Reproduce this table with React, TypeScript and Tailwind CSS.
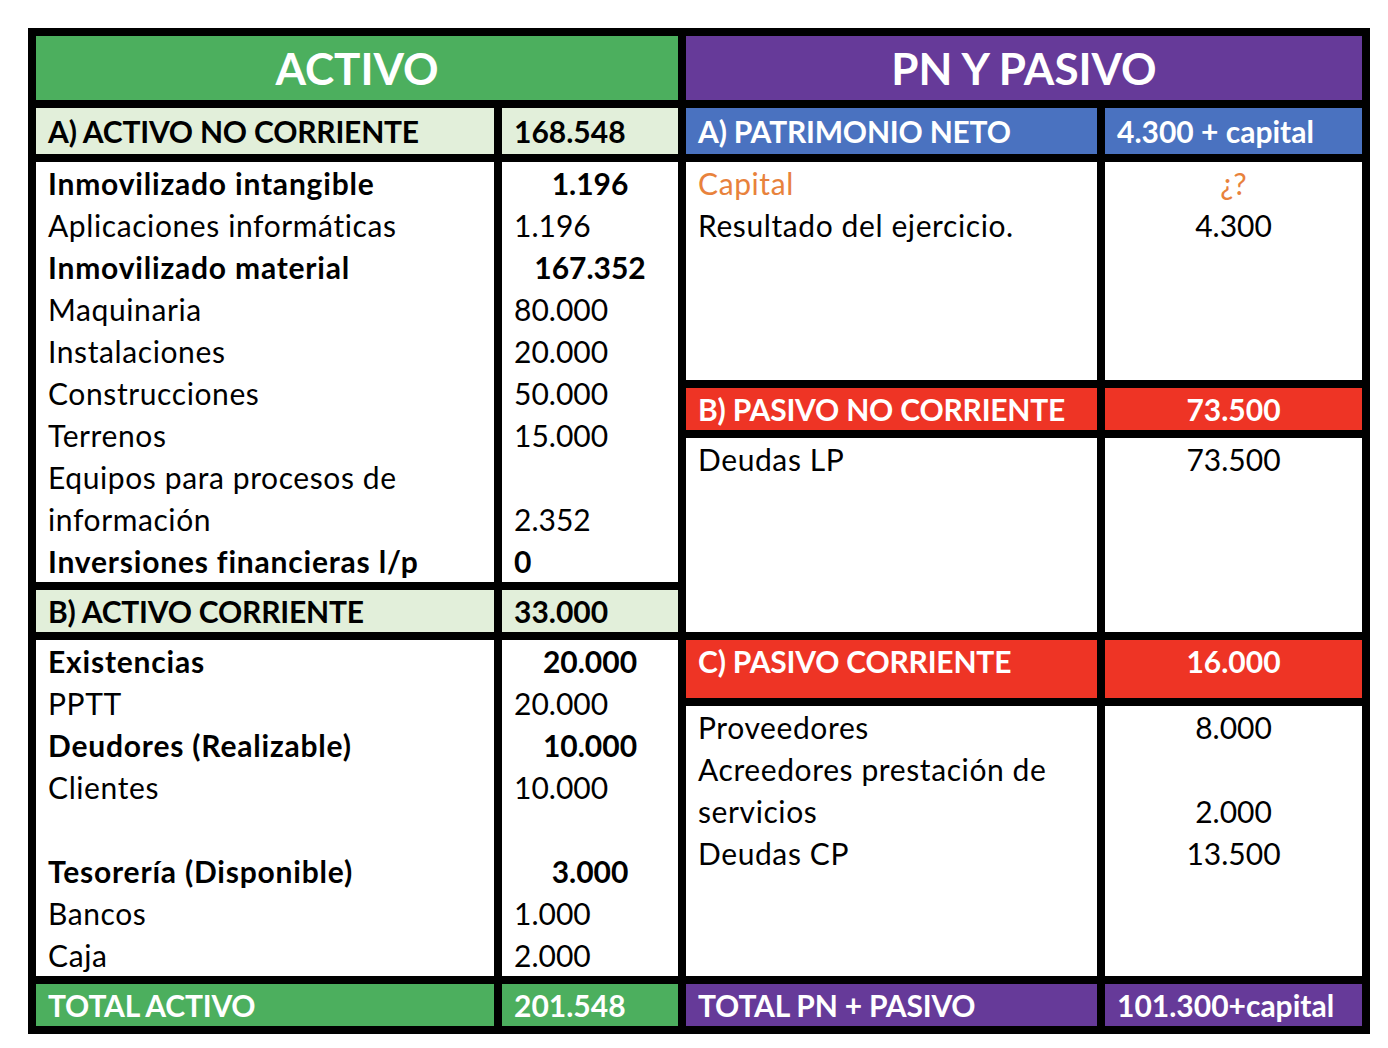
type Line = {
  label: string;
  value?: string;
  bold?: boolean;
  left?: boolean;
  color?: string;
};

const LEFT = "grid-cols-[458px_176px]";
const RIGHT = "grid-cols-[411px_257px]";

const activoNoCorriente: Line[] = [
  { label: "Inmovilizado intangible", value: "1.196", bold: true },
  { label: "Aplicaciones informáticas", value: "1.196" },
  { label: "Inmovilizado material", value: "167.352", bold: true },
  { label: "Maquinaria", value: "80.000" },
  { label: "Instalaciones", value: "20.000" },
  { label: "Construcciones", value: "50.000" },
  { label: "Terrenos", value: "15.000" },
  { label: "Equipos para procesos de", value: "" },
  { label: "información", value: "2.352" },
  { label: "Inversiones financieras l/p", value: "0", bold: true, left: true },
];

const activoCorriente: Line[] = [
  { label: "Existencias", value: "20.000", bold: true },
  { label: "PPTT", value: "20.000" },
  { label: "Deudores (Realizable)", value: "10.000", bold: true },
  { label: "Clientes", value: "10.000" },
  { label: "", value: "" },
  { label: "Tesorería (Disponible)", value: "3.000", bold: true },
  { label: "Bancos", value: "1.000" },
  { label: "Caja", value: "2.000" },
];

type SectionProps = {
  cols: string;
  label: string;
  value: string;
  bg: string;
  dark?: boolean;
  h: string;
  valueCenter?: boolean;
  top?: boolean;
};

function Section({ cols, label, value, bg, dark, h, valueCenter, top }: SectionProps) {
  const text = dark ? "text-black" : "text-white";
  const align = top ? "items-start" : "items-center";
  return (
    <div className={`grid gap-x-2 ${cols} ${h}`}>
      <div className={`${bg} ${text} flex ${align} pl-3 font-bold leading-[42px] tracking-[-0.2px] whitespace-nowrap`}>
        {label}
      </div>
      <div
        className={`${bg} ${text} flex ${align} ${valueCenter ? "justify-center" : "pl-3"} font-bold leading-[42px] whitespace-nowrap`}
      >
        {value}
      </div>
    </div>
  );
}

type BlockProps = {
  cols: string;
  lines: Line[];
  h: string;
  valueCenter?: boolean;
};

function Block({ cols, lines, h, valueCenter }: BlockProps) {
  return (
    <div className={`grid gap-x-2 ${cols} ${h}`}>
      <div className="bg-white pl-3 leading-[42px] text-black">
        {lines.map((l, i) => (
          <div
            key={i}
            className={`h-[42px] whitespace-nowrap ${l.bold ? "font-bold tracking-[0.8px]" : "tracking-[0.6px]"} ${l.color ?? ""}`}
          >
            {l.label}
          </div>
        ))}
      </div>
      <div className="bg-white leading-[42px] text-black">
        {lines.map((l, i) => (
          <div
            key={i}
            className={`h-[42px] whitespace-nowrap ${l.bold ? "font-bold" : ""} ${
              l.left ? "pl-3" : l.bold || valueCenter ? "text-center" : "pl-3"
            } ${l.color ?? ""}`}
          >
            {l.value}
          </div>
        ))}
      </div>
    </div>
  );
}

export default function App() {
  return (
    <div className="min-h-screen bg-white pl-[28px] pt-[28px] font-['Lato',sans-serif] text-[30px]">
      <div className="inline-flex gap-2 bg-black p-2">
        {/* Activo */}
        <div className="flex w-[642px] flex-col gap-2">
          <div className="flex h-[64px] items-center justify-center bg-[#4caf5e] text-[44px] font-bold text-white">
            ACTIVO
          </div>
          <Section cols={LEFT} label="A) ACTIVO NO CORRIENTE" value="168.548" bg="bg-[#e2efda]" dark h="h-[46px]" />
          <Block cols={LEFT} h="h-[420px]" lines={activoNoCorriente} />
          <Section cols={LEFT} label="B) ACTIVO CORRIENTE" value="33.000" bg="bg-[#e2efda]" dark h="h-[42px]" />
          <Block cols={LEFT} lines={activoCorriente} h="h-[336px]" />
          <Section cols={LEFT} label="TOTAL ACTIVO" value="201.548" bg="bg-[#4caf5e]" h="h-[42px]" />
        </div>

        {/* PN y Pasivo */}
        <div className="flex w-[676px] flex-col gap-2">
          <div className="flex h-[64px] items-center justify-center bg-[#663a99] text-[44px] font-bold text-white">
            PN Y PASIVO
          </div>
          <Section cols={RIGHT} label="A) PATRIMONIO NETO" value="4.300 + capital" bg="bg-[#4a72c0]" h="h-[46px]" />
          <Block
            cols={RIGHT}
            h="h-[218px]"
            valueCenter
            lines={[
              { label: "Capital", value: "¿?", color: "text-[#e8823c]" },
              { label: "Resultado del ejercicio.", value: "4.300" },
            ]}
          />
          <Section cols={RIGHT} label="B) PASIVO NO CORRIENTE" value="73.500" bg="bg-[#ee3425]" h="h-[42px]" valueCenter />
          <Block cols={RIGHT} lines={[{ label: "Deudas LP", value: "73.500" }]} h="h-[194px]" valueCenter />
          <Section cols={RIGHT} label="C) PASIVO CORRIENTE" value="16.000" bg="bg-[#ee3425]" h="h-[58px]" valueCenter top />
          <Block
            cols={RIGHT}
            h="h-[270px]"
            valueCenter
            lines={[
              { label: "Proveedores", value: "8.000" },
              { label: "Acreedores prestación de", value: "" },
              { label: "servicios", value: "2.000" },
              { label: "Deudas CP", value: "13.500" },
            ]}
          />
          <Section cols={RIGHT} label="TOTAL PN + PASIVO" value="101.300+capital" bg="bg-[#663a99]" h="h-[42px]" />
        </div>
      </div>
    </div>
  );
}
